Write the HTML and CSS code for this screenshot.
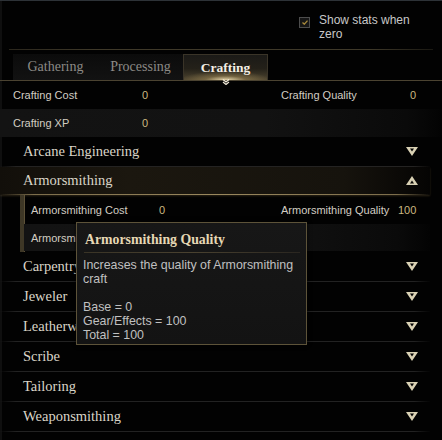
FILE: index.html
```html
<!DOCTYPE html>
<html lang="en">
<head>
<meta charset="utf-8">
<title>Crafting stats</title>
<link rel="stylesheet" href="styles.css">
</head>
<body>
<div class="panel">
  <div class="header">
    <span class="checkbox">
      <svg width="6" height="5" viewBox="0 0 6 5"><path d="M0.5 2.5L2.3 4.2L5.5 0.6" fill="none" stroke="#a88a3c" stroke-width="1.3"/></svg>
    </span>
    <span class="check-label">Show stats when zero</span>
  </div>
  <div class="rule"></div>

  <div class="tabs">
    <div class="tab">Gathering</div>
    <div class="tab">Processing</div>
    <div class="tab active">Crafting
      <svg class="tab-mark" width="8" height="6" viewBox="0 0 8 6"><path d="M1 0.5L4 3L7 0.5M1 3L4 5.5L7 3" fill="none" stroke="#f2ead8" stroke-width="1.2"/></svg>
    </div>
  </div>

  <div class="stats">
    <div class="stat-row">
      <span class="label">Crafting Cost</span><span class="value">0</span>
      <span class="label">Crafting Quality</span><span class="value">0</span>
    </div>
    <div class="stat-row alt">
      <span class="label">Crafting XP</span><span class="value">0</span>
    </div>
  </div>

  <div class="sections">
    <div class="section">
      <span class="section-title">Arcane Engineering</span>
      <svg class="chev" width="12" height="9" viewBox="0 0 12 9"><path fill-rule="evenodd" d="M0 0H12L6 9Z M4 1.6H8L6 4.6Z"/></svg>
    </div>
    <div class="section open">
      <span class="section-title">Armorsmithing</span>
      <svg class="chev" width="12" height="9" viewBox="0 0 12 9"><path fill-rule="evenodd" d="M0 9H12L6 0Z M4 7.4H8L6 4.4Z"/></svg>
    </div>
    <div class="sub">
      <div class="sub-row">
        <span class="label">Armorsmithing Cost</span><span class="value">0</span>
        <span class="label">Armorsmithing Quality</span><span class="value">100</span>
      </div>
      <div class="sub-row alt">
        <span class="label">Armorsmithing XP</span>
      </div>
    </div>
    <div class="section">
      <span class="section-title">Carpentry</span>
      <svg class="chev" width="12" height="9" viewBox="0 0 12 9"><path fill-rule="evenodd" d="M0 0H12L6 9Z M4 1.6H8L6 4.6Z"/></svg>
    </div>
    <div class="section">
      <span class="section-title">Jeweler</span>
      <svg class="chev" width="12" height="9" viewBox="0 0 12 9"><path fill-rule="evenodd" d="M0 0H12L6 9Z M4 1.6H8L6 4.6Z"/></svg>
    </div>
    <div class="section">
      <span class="section-title">Leatherworking</span>
      <svg class="chev" width="12" height="9" viewBox="0 0 12 9"><path fill-rule="evenodd" d="M0 0H12L6 9Z M4 1.6H8L6 4.6Z"/></svg>
    </div>
    <div class="section">
      <span class="section-title">Scribe</span>
      <svg class="chev" width="12" height="9" viewBox="0 0 12 9"><path fill-rule="evenodd" d="M0 0H12L6 9Z M4 1.6H8L6 4.6Z"/></svg>
    </div>
    <div class="section">
      <span class="section-title">Tailoring</span>
      <svg class="chev" width="12" height="9" viewBox="0 0 12 9"><path fill-rule="evenodd" d="M0 0H12L6 9Z M4 1.6H8L6 4.6Z"/></svg>
    </div>
    <div class="section">
      <span class="section-title">Weaponsmithing</span>
      <svg class="chev" width="12" height="9" viewBox="0 0 12 9"><path fill-rule="evenodd" d="M0 0H12L6 9Z M4 1.6H8L6 4.6Z"/></svg>
    </div>
  </div>

  <div class="tooltip">
    <div class="tt-title">Armorsmithing Quality</div>
    <div class="tt-sep"></div>
    <div class="tt-body">
      <div>Increases the quality of Armorsmithing craft</div>
      <div class="blank"></div>
      <div>Base = 0</div>
      <div>Gear/Effects = 100</div>
      <div>Total = 100</div>
    </div>
  </div>
</div>
</body>
</html>
```
FILE: styles.css
```css
html, body {
  margin: 0;
  padding: 0;
  background: #000;
}
body {
  width: 442px;
  height: 440px;
  overflow: hidden;
  font-family: "Liberation Sans", Arial, sans-serif;
}
.panel {
  position: relative;
  height: 439px;
  border-top: 1px solid #2d3237;
  background: #020202;
  box-shadow: inset 2px 0 0 #0f0f0f;
}
.header {
  height: 48px;
  box-sizing: border-box;
  padding: 15px 0 0 299px;
  display: flex;
  align-items: flex-start;
  gap: 9px;
}
.checkbox {
  width: 9px;
  height: 9px;
  border: 1px solid #4d4d4d;
  background: #161616;
  display: flex;
  align-items: center;
  justify-content: center;
  margin-top: 1px;
}
.check-label {
  width: 104px;
  margin-top: -3px;
  font-size: 12px;
  line-height: 14px;
  color: #c8c8c8;
}
.rule {
  height: 1px;
  margin: 0 9px;
  background: linear-gradient(90deg, #2a261c, #3f3929 20%, #3f3929 85%, #1a1812);
}
.tabs {
  margin-top: 4px;
  padding-left: 13px;
  display: flex;
  height: 26px;
  border-bottom: 1px solid #4b4331;
}
.tab {
  width: 85px;
  display: flex;
  align-items: center;
  justify-content: center;
  font-family: "Liberation Serif", "Times New Roman", serif;
  font-size: 14px;
  color: #8c8a86;
  background: linear-gradient(#0b0b0b, #121212);
}
.tab.active {
  position: relative;
  box-sizing: border-box;
  color: #f4efe4;
  font-weight: bold;
  font-size: 13.5px;
  border: 1px solid #3a3428;
  border-bottom: none;
  background:
    radial-gradient(ellipse 45px 9px at 50% 100%, rgba(255, 238, 190, 0.85) 0%, rgba(170, 145, 90, 0.45) 45%, rgba(0, 0, 0, 0) 100%),
    linear-gradient(#1b1a17, #242119 55%, #4e4530);
}
.tab-mark {
  position: absolute;
  left: 38px;
  bottom: -5px;
}
.stats {
  display: flex;
  flex-direction: column;
}
.stat-row {
  height: 28px;
  display: grid;
  grid-template-columns: 129px 139px 129px auto;
  align-items: center;
  padding-left: 13px;
  font-size: 11px;
}
.stat-row.alt, .sub-row.alt {
  background: linear-gradient(90deg, #131313 0%, #121212 60%, #0a0a0a 92%, #030303 100%);
}
.label {
  color: #d2cdc2;
}
.value {
  color: #cbb780;
}
.sections {
  width: 430px;
}
.section {
  height: 29px;
  display: flex;
  align-items: center;
  justify-content: space-between;
  padding: 0 12px 0 23px;
  border-bottom: 1px solid #1d1d1d;
  border-image: linear-gradient(90deg, rgba(40,40,40,0), #222 4%, #222 96%, rgba(40,40,40,0)) 1;
}
.section-title {
  font-family: "Liberation Serif", "Times New Roman", serif;
  font-size: 14.5px;
  color: #dad5c8;
}
.chev {
  fill: #d9d1b4;
}
.section.open {
  height: 27px;
  border-bottom: 1px solid #8a7a55;
  border-image: linear-gradient(90deg, rgba(80,70,50,0), #7d6e4c 8%, #9a885e 50%, #7d6e4c 92%, rgba(80,70,50,0)) 1;
  background: linear-gradient(90deg, #120f0a 0%, #1b170f 30%, #16130d 80%, #050403 100%);
  box-shadow: 0 1px 2px rgba(120, 100, 60, 0.35);
}
.sub {
  margin-left: 20px;
  height: 56px;
  padding-top: 1px;
  border-left: 4px solid #3e3726;
  box-shadow: inset 1px 0 0 #5c5138;
}
.sub-row {
  height: 28px;
  display: grid;
  grid-template-columns: 128px 122px 117px auto;
  align-items: center;
  padding-left: 7px;
  font-size: 11px;
}
.sub-row.alt {
  height: 27px;
}
.tooltip {
  position: absolute;
  left: 76px;
  top: 221px;
  width: 229px;
  height: 121px;
  border: 1px solid #5d5339;
  background: linear-gradient(#171717, #131313);
  box-shadow: 0 0 4px rgba(0, 0, 0, 0.8);
}
.tt-title {
  padding: 8px 0 0 8px;
  height: 18px;
  line-height: 18px;
  font-family: "Liberation Serif", "Times New Roman", serif;
  font-weight: bold;
  font-size: 13.8px;
  color: #e6d8b4;
}
.tt-sep {
  margin: 3px 6px 0 7px;
  height: 1px;
  background: linear-gradient(90deg, #3a3426, #4a4230 50%, #2a2620);
}
.tt-body {
  padding: 5px 0 0 6px;
  font-size: 12.4px;
  line-height: 14px;
  color: #c0c0c0;
  width: 218px;
}
.blank {
  height: 14px;
}
```
